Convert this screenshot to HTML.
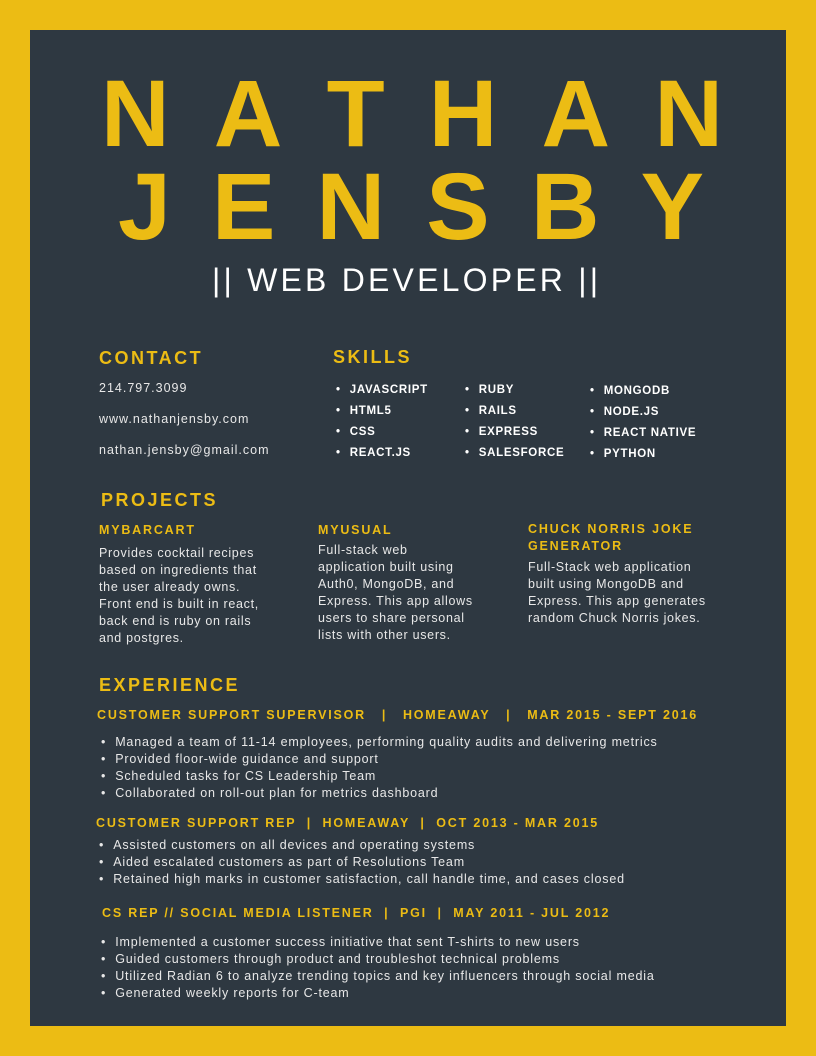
<!DOCTYPE html>
<html><head><meta charset="utf-8"><style>
*{margin:0;padding:0;box-sizing:border-box}
body{width:816px;height:1056px;background:#ecbc14;position:relative;font-family:"Liberation Sans",sans-serif;overflow:hidden}
#p{position:absolute;left:30px;top:30px;width:756px;height:996px;background:#2e3841}
.a{position:absolute;white-space:nowrap}
.big{display:flex;justify-content:space-between;color:#ecbc14;font-weight:bold;font-size:95px;line-height:1}
.y{color:#ecbc14;font-weight:bold;letter-spacing:2.5px}
.h{font-size:18px}
.w{color:#e8e8e8;font-size:12.5px;letter-spacing:1px}
.sk{color:#fff;font-weight:bold;font-size:11.5px;letter-spacing:0.7px;line-height:21px}
.sk div:before{content:"•";margin-right:9px}
.sub{font-size:12.5px;letter-spacing:1.8px}
.pj{color:#e8e8e8;font-size:12.5px;letter-spacing:0.7px;line-height:17px}
ul{list-style:none}
li{color:#e8e8e8;font-size:12.5px;letter-spacing:0.82px;line-height:17px}
li:before{content:"•";margin-right:9px}
</style></head><body><div id="p"></div>
<div class="a big" style="left:101px;top:67px;width:622px">
<span>N</span><span>A</span><span>T</span><span>H</span><span>A</span><span>N</span></div>
<div class="a big" style="left:118px;top:160px;width:586px">
<span>J</span><span>E</span><span>N</span><span>S</span><span>B</span><span>Y</span></div>
<div class="a" style="left:212px;top:262px;color:#fff;font-size:32px;letter-spacing:3.2px;font-weight:normal">|| WEB DEVELOPER ||</div>

<div class="a y h" style="left:99px;top:348px">CONTACT</div>
<div class="a w" style="left:99px;top:381px">214.797.3099</div>
<div class="a w" style="left:99px;top:412px">www.nathanjensby.com</div>
<div class="a w" style="left:99px;top:443px">nathan.jensby@gmail.com</div>

<div class="a y h" style="left:333px;top:347px">SKILLS</div>
<div class="a sk" style="left:336px;top:380px"><div>JAVASCRIPT</div><div>HTML5</div><div>CSS</div><div>REACT.JS</div></div>
<div class="a sk" style="left:465px;top:380px"><div>RUBY</div><div>RAILS</div><div>EXPRESS</div><div>SALESFORCE</div></div>
<div class="a sk" style="left:590px;top:381px"><div>MONGODB</div><div>NODE.JS</div><div>REACT NATIVE</div><div>PYTHON</div></div>

<div class="a y h" style="left:101px;top:490px">PROJECTS</div>
<div class="a y sub" style="left:99px;top:523px">MYBARCART</div>
<div class="a pj" style="left:99px;top:545px">Provides cocktail recipes<br>based on ingredients that<br>the user already owns.<br>Front end is built in react,<br>back end is ruby on rails<br>and postgres.</div>
<div class="a y sub" style="left:318px;top:523px">MYUSUAL</div>
<div class="a pj" style="left:318px;top:542px">Full-stack web<br>application built using<br>Auth0, MongoDB, and<br>Express. This app allows<br>users to share personal<br>lists with other users.</div>
<div class="a y sub" style="left:528px;top:521px;line-height:17px">CHUCK NORRIS JOKE<br>GENERATOR</div>
<div class="a pj" style="left:528px;top:559px">Full-Stack web application<br>built using MongoDB and<br>Express. This app generates<br>random Chuck Norris jokes.</div>

<div class="a y h" style="left:99px;top:675px">EXPERIENCE</div>
<div class="a y sub" style="left:97px;top:708px">CUSTOMER SUPPORT SUPERVISOR &nbsp;&nbsp;| &nbsp;&nbsp;HOMEAWAY &nbsp;&nbsp;| &nbsp;&nbsp;MAR 2015 - SEPT 2016</div>
<ul class="a" style="left:101px;top:734px"><li>Managed a team of 11-14 employees, performing quality audits and delivering metrics</li><li>Provided floor-wide guidance and support</li><li>Scheduled tasks for CS Leadership Team</li><li>Collaborated on roll-out plan for metrics dashboard</li></ul>
<div class="a y sub" style="left:96px;top:816px">CUSTOMER SUPPORT REP &nbsp;| &nbsp;HOMEAWAY &nbsp;| &nbsp;OCT 2013 - MAR 2015</div>
<ul class="a" style="left:99px;top:837px"><li>Assisted customers on all devices and operating systems</li><li>Aided escalated customers as part of Resolutions Team</li><li>Retained high marks in customer satisfaction, call handle time, and cases closed</li></ul>
<div class="a y sub" style="left:102px;top:906px">CS REP // SOCIAL MEDIA LISTENER &nbsp;| &nbsp;PGI &nbsp;| &nbsp;MAY 2011 - JUL 2012</div>
<ul class="a" style="left:101px;top:934px"><li>Implemented a customer success initiative that sent T-shirts to new users</li><li>Guided customers through product and troubleshot technical problems</li><li>Utilized Radian 6 to analyze trending topics and key influencers through social media</li><li>Generated weekly reports for C-team</li></ul>
</body></html>
